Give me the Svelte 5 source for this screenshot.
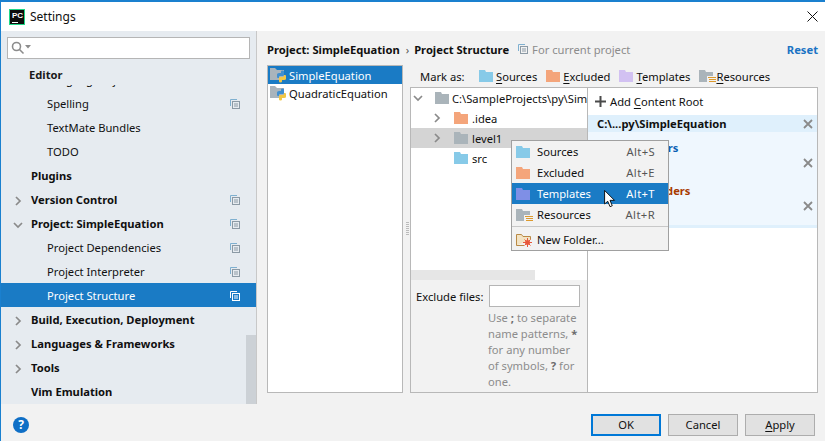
<script>
  const rows = [
    { label: 'Language Injections', level: 2, clip: true },
    { label: 'Spelling', level: 2, copy: true },
    { label: 'TextMate Bundles', level: 2 },
    { label: 'TODO', level: 2 },
    { label: 'Plugins', level: 1 },
    { label: 'Version Control', level: 1, arrow: 'right', copy: true },
    { label: 'Project: SimpleEquation', level: 1, arrow: 'down', copy: true },
    { label: 'Project Dependencies', level: 2, copy: true },
    { label: 'Project Interpreter', level: 2, copy: true },
    { label: 'Project Structure', level: 2, copy: true, selected: true },
    { label: 'Build, Execution, Deployment', level: 1, arrow: 'right' },
    { label: 'Languages & Frameworks', level: 1, arrow: 'right' },
    { label: 'Tools', level: 1, arrow: 'right' },
    { label: 'Vim Emulation', level: 1 }
  ];
  const marks = [
    { u: 'S', post: 'ources', kind: 'blue' },
    { u: 'E', post: 'xcluded', kind: 'orange' },
    { u: 'T', post: 'emplates', kind: 'purple' },
    { u: 'R', post: 'esources', kind: 'res' }
  ];
  const tree = [
    { label: 'C:\\SampleProjects\\py\\SimpleEquation', depth: 0, arrow: 'down', kind: 'gray' },
    { label: '.idea', depth: 1, arrow: 'right', kind: 'orange' },
    { label: 'level1', depth: 1, arrow: 'right', kind: 'gray', hover: true },
    { label: 'src', depth: 1, kind: 'blue' }
  ];
  const menu = [
    { label: 'Sources', key: 'Alt+S', kind: 'blue' },
    { label: 'Excluded', key: 'Alt+E', kind: 'orange' },
    { label: 'Templates', key: 'Alt+T', kind: 'violet', active: true },
    { label: 'Resources', key: 'Alt+R', kind: 'res' }
  ];
</script>

{#snippet folder(kind)}
  <svg class="folder {kind}" width="17" height="12" viewBox="0 0 17 12">
    {#if kind === 'res'}
      <path d="M0 0h6l1 2h7v4H8v6H0z" />
      <path class="lines" d="M9 7.500h8M10 9.500h7M10 11.500h7" />
    {:else}
      <path d="M0 0h6l1 2h7v10H0z" />
    {/if}
  </svg>
{/snippet}

{#snippet arrowIcon(dir)}
  <svg class="arrow" width="10" height="10" viewBox="0 0 10 10">
    {#if dir === 'down'}
      <path d="M1 3l4 4 4-4" />
    {:else}
      <path d="M3 1l4 4-4 4" />
    {/if}
  </svg>
{/snippet}

{#snippet copyIcon(light)}
  <svg class="copy" class:light width="10" height="10" viewBox="0 0 10 10">
    <path d="M.5 7V.5H7" />
    <rect class="front" x="2.500" y="2.500" width="7" height="7" />
    <path class="bars" d="M4 5h4M4 7h4" />
  </svg>
{/snippet}

{#snippet pyModule()}
  <svg class="pymod" width="16" height="16" viewBox="0 0 16 16">
    <path class="base" d="M0 1h5l2 2h7v10H0z" />
    <path class="py1" d="M7 10V7.500Q7 6 9 6h2V4.500Q11 3.500 12.500 3.500T14 4.500V8Q14 9 12.500 9H10Q9 9 9 10v1H8Q7 11 7 10z" />
    <path class="py2" d="M16 9v3q0 1-2 1h-2v1.500q0 1-1.500 1T9 14.500V11q0-1 1.500-1H13q1 0 1-1V8h1q1 0 1 1z" />
  </svg>
{/snippet}

{#snippet close()}
  <svg class="x" width="10" height="10" viewBox="0 0 10 10"><path d="M1 1l8 8M9 1l-8 8" /></svg>
{/snippet}

<div class="window">
  <header class="titlebar">
    <div class="logo"><span>PC</span><i></i></div>
    <span class="title">Settings</span>
    <svg class="winclose" width="11" height="11" viewBox="0 0 11 11"><path d="M.5.500l10 10M10.500.500l-10 10" /></svg>
  </header>

  <div class="body">
    <aside class="sidebar">
      <div class="search">
        <svg width="20" height="14" viewBox="0 0 20 14">
          <circle cx="5.500" cy="5.500" r="4" />
          <path d="M8.500 8.500l4 4" />
          <path class="caret" d="M14 4h6l-3 3.500z" />
        </svg>
      </div>
      <div class="tree-wrap">
        <div class="sticky">Editor</div>
        <div class="rows">
          {#each rows as r}
            <div class="row level{r.level}" class:selected={r.selected}>
              {#if r.arrow}<span class="arr">{@render arrowIcon(r.arrow)}</span>{/if}
              <span class="lbl">{r.label}</span>
              {#if r.copy}<span class="cp">{@render copyIcon(r.selected)}</span>{/if}
            </div>
          {/each}
        </div>
        <div class="vbar"></div>
      </div>
    </aside>

    <main class="main">
      <div class="crumbs">
        <b>Project: SimpleEquation</b>
        <span class="sep">›</span>
        <b>Project Structure</b>
        <span class="scope">{@render copyIcon(false)}<span>For current project</span></span>
        <b class="reset">Reset</b>
      </div>

      <div class="columns">
        <div class="modules">
          <div class="module on">{@render pyModule()}<span>SimpleEquation</span></div>
          <div class="module">{@render pyModule()}<span>QuadraticEquation</span></div>
        </div>
        <div class="splitter"><i></i></div>
        <div class="editor">
          <div class="markbar">
            <span class="markas">Mark as:</span>
            {#each marks as m}
              <span class="mark">{@render folder(m.kind)}<span><u>{m.u}</u>{m.post}</span></span>
            {/each}
          </div>
          <div class="panes">
            <div class="leftpane">
              <div class="treebox">
                {#each tree as t}
                  <div class="tnode d{t.depth}" class:hover={t.hover}>
                    <span class="tarrow">{#if t.arrow}{@render arrowIcon(t.arrow)}{/if}</span>
                    {@render folder(t.kind)}
                    <span class="tlabel">{t.label}</span>
                  </div>
                {/each}
                <div class="hbar"></div>
              </div>
              <div class="exclude">
                <label for="ex">Exclude files:</label>
                <div class="excol">
                  <input id="ex" type="text" />
                  <p>Use <b>;</b> to separate name patterns, <b>*</b> for any number of symbols, <b>?</b> for one.</p>
                </div>
              </div>
            </div>
            <div class="roots">
              <div class="addroot">
                <svg width="11" height="11" viewBox="0 0 11 11"><path d="M5.500 0v11M0 5.500h11" /></svg>
                <span>Add <u>C</u>ontent Root</span>
              </div>
              <div class="rootcard">
                <div class="roothead"><b>C:\...py\SimpleEquation</b>{@render close()}</div>
                <div class="sect src"><b>Source Folders</b></div>
                <div class="item"><span>src</span>{@render close()}</div>
                <div class="sect exc"><b>Excluded Folders</b></div>
                <div class="item"><span>.idea</span>{@render close()}</div>
                <div class="strip"></div>
              </div>
            </div>
          </div>
        </div>
      </div>
    </main>
  </div>

  <footer class="footer">
    <span class="help">?</span>
    <div class="buttons">
      <button class="primary">OK</button>
      <button>Cancel</button>
      <button><u>A</u>pply</button>
    </div>
  </footer>

  <div class="popup">
    {#each menu as m}
      <div class="mitem" class:active={m.active}>
        {@render folder(m.kind)}
        <span class="mlabel">{m.label}</span>
        <span class="mkey">{m.key}</span>
      </div>
    {/each}
    <div class="msep"></div>
    <div class="mitem newf">
      <svg class="nf" width="17" height="14" viewBox="0 0 17 14">
        <path class="nfb" d="M.5 12.500V1.500h5l1.500 2h7.500v3M8 12.500H.5" />
        <circle cx="11.500" cy="9.500" r="2.500" />
        <path class="ray" d="M11.500 5v9M7 9.500h9M8.500 6.500l6 6M14.500 6.500l-6 6" />
      </svg>
      <span class="mlabel">New Folder...</span>
    </div>
  </div>

  <svg class="cursor" width="12" height="18" viewBox="0 0 13 20">
    <path d="M.5.500v15l3.500-3 2.500 6 2.500-1-2.500-6h5z" />
  </svg>
</div>

<style>
  :global(body) { margin: 0; }
  .window {
    position: relative;
    width: 825px;
    height: 441px;
    box-sizing: border-box;
    border-top: 2px solid #1a80cf;
    border-left: 1px solid #1a80cf;
    background: #f2f2f2;
    overflow: hidden;
    font-family: "Noto Sans", "Open Sans", sans-serif;
    font-size: 11.2px;
    color: #101010;
    display: flex;
    flex-direction: column;
  }
  b { font-weight: 700; }

  .titlebar { height: 29px; background: #fff; display: flex; align-items: center; flex: none; padding-left: 8px; padding-right: 7px; }
  .logo { width: 16px; height: 16px; background: #0d0d0d; border: 1px solid #21d789; box-sizing: border-box; color: #fff; font: 700 8px/9px "Liberation Sans", sans-serif; padding: 1px 0 0 2px; }
  .logo span { display: block; }
  .logo i { display: block; width: 6px; height: 1px; background: #fff; margin-top: 2px; }
  .title { margin-left: 5px; font-size: 12px; }
  .winclose { margin-left: auto; }
  .winclose path { stroke: #111; fill: none; }

  .body { height: 373px; display: flex; flex: none; }

  .sidebar { width: 255px; background: #e6ebf0; display: flex; flex-direction: column; flex: none; border-right: 1px solid #c8c8c8; }
  .search { margin: 6px 6px 0; height: 22px; flex: none; box-sizing: border-box; background: #fff; border: 1px solid #b5b5b5; display: flex; align-items: center; padding-left: 3px; }
  .search svg { fill: none; stroke: #8c8c8c; stroke-width: 1.600; }
  .search .caret { fill: #8c8c8c; stroke: none; }

  .tree-wrap { position: relative; flex: 1; overflow: hidden; }
  .sticky { position: absolute; left: 0; top: 0; right: 0; height: 21px; padding-left: 28px; line-height: 21px; font-weight: 700; background: #e6ebf0; z-index: 2; margin-top: 5px; color: #1a1a1a; }
  .rows { margin-top: 8px; }
  .row { height: 24px; display: flex; align-items: center; position: relative; }
  .row.level2 { padding-left: 46px; }
  .row.level1 { padding-left: 30px; font-weight: 700; }
  .row.selected { background: #1a7bc5; color: #fff; }
  .row .arr { position: absolute; left: 12px; top: 7px; height: 10px; }
  .row .cp { position: absolute; left: 229px; top: 6px; height: 10px; }
  .arrow { fill: none; stroke: #8a8a8a; stroke-width: 1.700; }
  .copy { fill: none; stroke: #7fb0d0; flex: none; }
  .copy .front, .copy .bars { stroke: #8c9aa5; }
  .copy.light, .copy.light .front, .copy.light .bars { stroke: #fff; }
  .vbar { position: absolute; right: 0; bottom: 0; width: 10px; height: 69px; background: #ccd1d6; }

  .main { flex: 1; padding: 9px 7px 11px 10px; display: flex; flex-direction: column; min-width: 0; }
  .crumbs { height: 18px; margin-bottom: 7px; display: flex; align-items: center; white-space: nowrap; flex: none; }
  .crumbs .sep { margin: 0 5px 0 6px; color: #555; }
  .scope { display: flex; align-items: center; gap: 4px; margin-left: 9px; color: #8c8c8c; }
  .reset { margin-left: auto; color: #1a73c4; }

  .columns { flex: 1; display: flex; min-height: 0; }
  .modules { width: 136px; flex: none; box-sizing: border-box; background: #fff; border: 1px solid #b8b8b8; }
  .module { height: 18px; display: flex; align-items: center; gap: 3px; padding-left: 2px; }
  .module.on { background: #1a7bc5; color: #fff; }
  .pymod { flex: none; }
  .pymod .base { fill: #a9b4bc; }
  .pymod .py1 { fill: #3f8fd0; }
  .pymod .py2 { fill: #f2c744; }

  .splitter { width: 7px; flex: none; position: relative; }
  .splitter i { position: absolute; left: 3px; top: 157px; width: 3px; height: 13px; background: repeating-linear-gradient(#bbb 0 1px, transparent 1px 2px); }

  .editor { flex: 1; display: flex; flex-direction: column; min-width: 0; }
  .markbar { height: 22px; flex: none; display: flex; align-items: center; padding-left: 10px; white-space: nowrap; }
  .markas { width: 59px; flex: none; }
  .mark { display: flex; align-items: center; margin-right: 9px; }
  u { text-decoration: underline; text-underline-offset: 2px; text-decoration-thickness: 1px; }

  .folder { flex: none; }
  .folder.blue { fill: #87cae8; }
  .folder.orange { fill: #f4a57b; }
  .folder.purple { fill: #d2c1f2; }
  .folder.violet { fill: #7f8fe6; }
  .folder.gray { fill: #aab4ba; }
  .folder.res { fill: #aab4ba; }
  .folder .lines { fill: none; stroke: #dd9a2e; }

  .panes { flex: 1; display: flex; min-height: 0; }
  .leftpane { width: 177px; flex: none; box-sizing: border-box; border: 1px solid #b8b8b8; border-right: 0; display: flex; flex-direction: column; }
  .treebox { height: 192px; flex: none; background: #fff; display: flex; flex-direction: column; white-space: nowrap; overflow: hidden; }
  .tnode { height: 20px; flex: none; display: flex; align-items: center; }
  .tnode.hover { background: #d4d4d4; }
  .tnode.d0 { padding-left: 2px; }
  .tnode.d1 { padding-left: 21px; }
  .tarrow { width: 22px; height: 10px; flex: none; display: flex; }
  .tnode.d0 .tlabel { margin-left: 0; }
  .tlabel { margin-left: 1px; }
  .hbar { margin-top: auto; width: 124px; height: 10px; background: #e6e6e6; flex: none; }
  .exclude { flex: 1; display: flex; padding: 5px 6px 0 5px; white-space: nowrap; }
  .exclude label { line-height: 24px; width: 73px; flex: none; }
  .excol { width: 91px; }
  .excol input { display: block; width: 91px; height: 22px; box-sizing: border-box; background: #fff; border: 1px solid #b5b5b5; padding: 0; margin: 0; border-radius: 0; outline: none; }
  .excol p { margin: 3px 0 0 -1px; color: #8c8c8c; line-height: 16px; white-space: normal; }
  .excol p b { color: #6b6b6b; }

  .roots { flex: 1; background: #fff; border: 1px solid #b8b8b8; display: flex; flex-direction: column; box-sizing: border-box; }
  .addroot { height: 27px; display: flex; align-items: center; gap: 4px; padding-left: 7px; flex: none; }
  .addroot svg { stroke: #4a4a4a; stroke-width: 2; fill: none; }
  .rootcard { background: #eff7fe; }
  .roothead { height: 17px; background: #dff0fc; display: flex; align-items: center; justify-content: space-between; padding: 0 4px 0 9px; }
  .sect { line-height: 16px; padding: 8px 0 0 9px; }
  .sect.src { color: #0b5fb3; }
  .sect.exc { color: #a83a00; padding-top: 13px; }
  .item { height: 14px; display: flex; align-items: center; justify-content: space-between; padding: 0 4px 0 9px; }
  .strip { height: 3px; margin-top: 12px; background: #dff0fc; }
  .x { stroke: #8a8a8a; stroke-width: 1.800; fill: none; flex: none; }

  .footer { flex: 1; display: flex; align-items: center; justify-content: space-between; padding: 4px 10px 0 12px; }
  .help { width: 16px; height: 16px; border-radius: 50%; background: #0f6fc6; color: #fff; font-weight: 700; font-size: 12px; line-height: 16px; text-align: center; }
  .buttons { display: flex; gap: 7px; }
  button { width: 70px; height: 22px; box-sizing: border-box; padding: 0; background: #e1e1e1; border: 1px solid #adadad; border-radius: 0; font: inherit; color: #111; }
  button.primary { border: 2px solid #0078d7; }

  .popup { position: absolute; left: 510px; top: 138px; width: 158px; height: 111px; box-sizing: border-box; background: #f2f2f2; border: 1px solid #a0a0a0; z-index: 5; }
  .mitem { height: 21px; display: flex; align-items: center; padding: 0 13px 0 4px; }
  .mlabel { margin-left: 4px; }
  .mkey { margin-left: auto; color: #555; letter-spacing: .4px; }
  .mitem.active { background: #1a7bc5; color: #fff; }
  .mitem.active .mkey { color: #fff; }
  .msep { height: 1px; background: #c8c8c8; margin: 1px 0 2px; }
  .nf { fill: none; flex: none; }
  .nf .nfb { fill: #f3e3c3; stroke: #b98a45; }
  .nf circle { fill: #e8573a; }
  .nf .ray { stroke: #e8573a; }

  .cursor { position: absolute; left: 603px; top: 188px; z-index: 6; fill: #fff; stroke: #000; }
</style>
